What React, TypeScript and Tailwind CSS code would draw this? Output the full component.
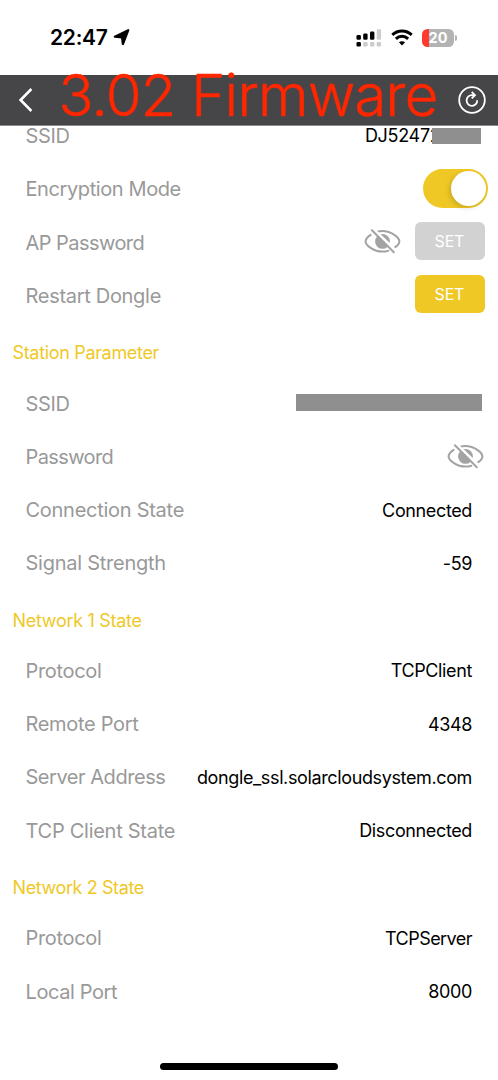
import React from "react";

type Row = {
    label: string;
    labelClass?: string;
    value?: React.ReactNode;
    valueClass?: string;
};

const EyeOff = () => (
    <svg width="38" height="26" viewBox="0 0 38 26" fill="none" stroke="#a3a3a3" strokeWidth="2" strokeLinecap="round">
        <circle cx="19.500" cy="13.400" r="7.400" fill="#a3a3a3" stroke="none" />
        <path d="M7.600 6.800C4.600 8.800 2.600 11.600 2.600 13.400C2.600 17 10.400 23.600 19.400 23.600C21.400 23.600 23.400 23.300 25.300 22.700" />
        <path d="M14.400 3.700C16 3.300 17.700 3.100 19.400 3.100C28.400 3.100 36.400 9.600 36.400 13.400C36.400 15.600 33.800 18.300 30.100 20.400" />
        <path d="M10.200 1.600L33.200 23.600" stroke="#fff" strokeWidth="3.400" strokeLinecap="butt" />
        <path d="M8.900 2.300L30.800 24.200" />
    </svg>
);

const SetButton = ({ disabled }: { disabled?: boolean }) => (
    <button
        className={`block h-[38px] w-[70px] rounded-[6px] pr-[2px] text-[16px] tracking-[-0.2px] text-white ${
            disabled ? "bg-[#d2d2d2]" : "bg-[#efc826]"
        }`}
    >
        SET
    </button>
);

const Toggle = () => (
    <div className="flex h-[39px] w-[65px] items-center justify-end rounded-full bg-[#efc826] pr-[2px]">
        <div className="size-[35px] rounded-full bg-white shadow-[-2px_2px_5px_rgba(0,0,0,0.15)]" />
    </div>
);

const apRows: Row[] = [
    {
        label: "SSID",
        value: (
            <div className="flex items-center">
                <span>DJ52472</span>
                <span className="relative -ml-[9px] h-4 w-[49px] bg-[#8f8f8f]" />
            </div>
        ),
        valueClass: "mr-[17.500px] tracking-[-0.3px]",
    },
    { label: "Encryption Mode", labelClass: "tracking-[-0.4px]", value: <Toggle />, valueClass: "mr-[10px] pb-px" },
    {
        label: "AP Password",
        labelClass: "tracking-[-0.55px]",
        value: (
            <div className="flex items-center gap-[14px]">
                <EyeOff />
                <SetButton disabled />
            </div>
        ),
        valueClass: "mr-[12.600px] pb-[3px]",
    },
    { label: "Restart Dongle", labelClass: "tracking-[-0.3px]", value: <SetButton />, valueClass: "mr-[12.600px] pb-[4px]" },
];

const sections: { title: string; titleClass: string; rows: Row[] }[] = [
    {
        title: "Station Parameter",
        titleClass: "tracking-[-0.33px]",
        rows: [
            { label: "SSID", value: <div className="mb-[2px] h-[17px] w-[186px] bg-[#8f8f8f]" />, valueClass: "mr-[16.500px]" },
            { label: "Password", labelClass: "tracking-[-0.6px]", value: <EyeOff />, valueClass: "mr-[14.500px] pb-px" },
            { label: "Connection State", labelClass: "tracking-[-0.27px]", value: "Connected" },
            { label: "Signal Strength", labelClass: "tracking-[-0.25px]", value: "-59" },
        ],
    },
    {
        title: "Network 1 State",
        titleClass: "tracking-[-0.3px]",
        rows: [
            { label: "Protocol", value: "TCPClient" },
            { label: "Remote Port", value: "4348" },
            { label: "Server Address", labelClass: "tracking-[-0.46px]", value: "dongle_ssl.solarcloudsystem.com" },
            { label: "TCP Client State", labelClass: "tracking-[-0.27px]", value: "Disconnected" },
        ],
    },
    {
        title: "Network 2 State",
        titleClass: "tracking-[-0.4px]",
        rows: [
            { label: "Protocol", value: "TCPServer", valueClass: "mr-[26px] pt-px tracking-[-0.55px]" },
            { label: "Local Port", labelClass: "tracking-[-0.4px]", value: "8000" },
        ],
    },
];

const ParamRow = ({
    label,
    labelClass = "tracking-[-0.32px]",
    value,
    valueClass = "mr-[26px] pt-px tracking-[-0.37px]",
}: Row) => (
    <div className="flex h-[53.300px] items-center justify-between pl-[25.500px]">
        <span className={`whitespace-nowrap pt-px text-[20px] text-[#999] ${labelClass}`}>{label}</span>
        <div className={`whitespace-nowrap text-[18px] text-black ${valueClass}`}>{value}</div>
    </div>
);

const StatusBar = () => (
    <div className="flex h-[75px] items-center justify-between pl-[50px] pr-[41px]">
        <div className="flex items-center gap-[5px]">
            <span className="text-[21px] font-semibold tracking-[-0.25px] text-black">22:47</span>
            <svg width="17" height="17" viewBox="0 0 17 17">
                <path
                    d="M15.300 1.200L9.900 15L9 8.300L1.800 7.700Z"
                    stroke="#000"
                    strokeWidth="2.200"
                    strokeLinejoin="round"
                />
            </svg>
        </div>
        <div className="flex items-center gap-[9px]">
            <svg width="26" height="18" viewBox="0 0 26 18">
                <rect x="0.500" y="6" width="4.400" height="4.800" rx="1.300" />
                <rect x="7.200" y="4.500" width="4.400" height="6.300" rx="1.300" />
                <rect x="14" y="2.500" width="4.400" height="8.300" rx="1.300" />
                <rect x="20.700" y="0.300" width="4.400" height="10.500" rx="1.300" fill="#ccc" />
                <rect x="0.500" y="13" width="4.400" height="4.600" rx="1.300" />
                <rect x="7.200" y="13" width="4.400" height="4.600" rx="1.300" fill="#ccc" />
                <rect x="14" y="13" width="4.400" height="4.600" rx="1.300" fill="#ccc" />
                <rect x="20.700" y="13" width="4.400" height="4.600" rx="1.300" fill="#ccc" />
            </svg>
            <svg width="22" height="17" viewBox="0 0 22 17" fill="none" stroke="#000" strokeWidth="3">
                <path d="M1.300 5.900C6.700 0.600 15.300 0.600 20.700 5.900" />
                <path d="M4.900 9.900C8.300 6.500 13.700 6.500 17.100 9.900" />
                <path d="M11 16.600L7.900 13.300C9.700 11.800 12.300 11.800 14.100 13.300Z" fill="#000" stroke="none" />
            </svg>
            <div className="flex items-center gap-px">
                <div className="flex h-[18px] w-[32px] items-center justify-center rounded-[5.500px] bg-[linear-gradient(90deg,#ff3b30_21%,#b3b3b3_21%)] text-[14.500px] font-bold text-white">
                    20
                </div>
                <div className="h-[6px] w-[2px] rounded-r-full bg-[#b3b3b3]" />
            </div>
        </div>
    </div>
);

const NavBar = () => (
    <div className="relative z-10 flex h-[50.500px] items-center justify-between border-b border-[#8a8a8a] bg-[#464648] pl-[19px] pr-[12px]">
        <svg width="14" height="24" viewBox="0 0 14 24" fill="none" stroke="#fff" strokeWidth="2.500">
            <path d="M12.400 1L1.600 12L12.400 23" />
        </svg>
        <h1 className="absolute left-[58.500px] top-[-5.500px] whitespace-nowrap text-[58px] font-light leading-[50px] tracking-[-0.75px] text-[#ff2600] [-webkit-text-stroke:0.5px_#ff2600]">
            3.02 Firmware
        </h1>
        <svg width="28" height="28" viewBox="0 0 28 28" fill="none" stroke="#fff" strokeWidth="1.800">
            <circle cx="14" cy="14" r="12.800" />
            <path d="M19.200 14.200A5.300 5.300 0 1 1 14 9.200H16.600" />
            <path d="M13.700 6L17 9.200L13.700 12.400" />
        </svg>
    </div>
);

export default function App() {
    return (
        <div className="flex h-[1080px] w-[498px] flex-col overflow-hidden bg-white font-['Inter',sans-serif]">
            <StatusBar />
            <NavBar />
            <div className="-mt-[16.500px] flex-1">
                {apRows.map((row) => (
                    <ParamRow key={row.label} {...row} />
                ))}
                {sections.map((section) => (
                    <section key={section.title}>
                        <h2
                            className={`flex h-[54.200px] items-center pl-[12.500px] pt-[7px] text-[18px] text-[#efc826] ${section.titleClass}`}
                        >
                            {section.title}
                        </h2>
                        {section.rows.map((row) => (
                            <ParamRow key={row.label} {...row} />
                        ))}
                    </section>
                ))}
            </div>
            {/* Home indicator */}
            <div className="mx-auto mb-[10px] h-[7px] w-[178px] rounded-full bg-black" />
        </div>
    );
}
